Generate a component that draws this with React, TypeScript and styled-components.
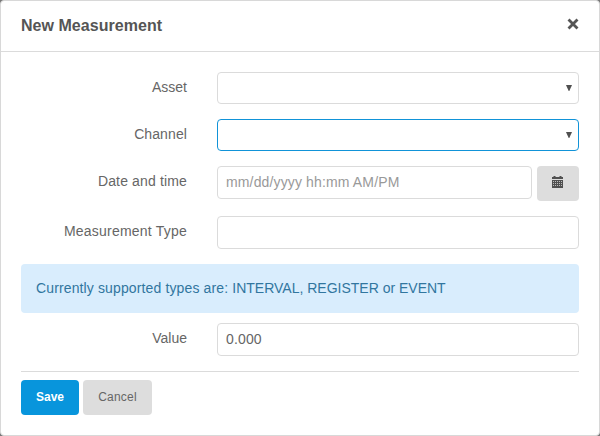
import React from 'react';
import styled, { createGlobalStyle } from 'styled-components';

const GlobalStyle = createGlobalStyle`
  *, *::before, *::after { box-sizing: border-box; }
  body {
    margin: 0;
    background: #777;
    font-family: "Liberation Sans", Arial, sans-serif;
    font-size: 14px;
    color: #666;
  }
  button, input { font-family: inherit; margin: 0; }
`;

const Dialog = styled.section`
  width: 600px;
  height: 436px;
  background: #fff;
  border: 1px solid #d8d8d8;
  border-radius: 4px;
`;

const Header = styled.header`
  display: flex;
  justify-content: space-between;
  height: 51px;
  padding: 0 20px;
  border-bottom: 1px solid #dbdbdb;
`;

const Title = styled.h1`
  margin: 0;
  font-size: 16px;
  line-height: 50px;
  font-weight: bold;
  letter-spacing: 0.04px;
  color: #555;
`;

const CloseButton = styled.button`
  display: flex;
  width: 12px;
  height: 12px;
  margin-top: 17px;
  padding: 0;
  border: 0;
  background: none;
`;

const Form = styled.form`
  padding: 20px 20px 0;
`;

const Row = styled.div`
  display: grid;
  grid-template-columns: 166px 1fr;
  column-gap: 30px;
  align-items: start;
  margin-bottom: 15px;
`;

const Label = styled.label<{ $tracking?: number }>`
  text-align: right;
  line-height: 30px;
  white-space: nowrap;
  letter-spacing: ${(p) => p.$tracking ?? 0}px;
`;

const SelectBox = styled.div<{ $focused?: boolean }>`
  display: flex;
  align-items: center;
  justify-content: flex-end;
  height: 32px;
  padding-right: 6px;
  border: 1px solid ${(p) => (p.$focused ? '#1193d8' : '#dbdbdb')};
  border-radius: 4px;
`;

const TextInput = styled.input`
  display: block;
  width: 100%;
  min-width: 0;
  height: 33px;
  padding: 0 8px 2px;
  border: 1px solid #dbdbdb;
  border-radius: 4px;
  background: #fff;
  color: #666;
  font-size: 14px;
  letter-spacing: 0.14px;
  outline: 0;
  &::placeholder { color: #999; opacity: 1; }
`;

const DateGroup = styled.div`
  display: flex;
  align-items: flex-start;
  gap: 5px;
`;

const CalendarButton = styled.button`
  flex: 0 0 42px;
  display: flex;
  justify-content: center;
  align-items: flex-start;
  height: 35px;
  padding: 10px 0 0;
  border: 0;
  border-radius: 4px;
  background: #ddd;
`;

const Notice = styled.div`
  height: 49px;
  margin-bottom: 10px;
  padding: 0 15px;
  border-radius: 4px;
  background: #d9edfd;
  color: #31769f;
  line-height: 48px;
`;

const NoticeLead = styled.span`
  letter-spacing: 0.13px;
`;

const Footer = styled.footer`
  display: flex;
  gap: 4px;
  padding-top: 8px;
  border-top: 1px solid #dbdbdb;
`;

const ActionButton = styled.button<{ $primary?: boolean }>`
  width: ${(p) => (p.$primary ? 58 : 69)}px;
  height: 35px;
  padding: 0 0 2px;
  border: 0;
  border-radius: 4px;
  background: ${(p) => (p.$primary ? '#0895dc' : '#ddd')};
  color: ${(p) => (p.$primary ? '#fff' : '#666')};
  font-size: 12px;
  font-weight: ${(p) => (p.$primary ? 'bold' : 'normal')};
  letter-spacing: ${(p) => (p.$primary ? 0 : 0.2)}px;
`;

const Arrow = () => (
  <svg width="6" height="6" viewBox="0 0 6 6">
    <path d="M0 0h6L3.3 6h-.6z" fill="#505050" />
  </svg>
);

const CloseIcon = () => (
  <svg width="12" height="12" viewBox="0 0 12 12">
    <path
      d="M2.5 2.4l7 7M9.5 2.4l-7 7"
      stroke="#555"
      strokeWidth="2.8"
      strokeLinecap="square"
    />
  </svg>
);

const CalendarIcon = () => (
  <svg width="12" height="12" viewBox="0 0 12 12">
    <path d="M0 1h1.500V0h2v1h4V0h2v1H11v2H0z" fill="#505050" />
    <path d="M0 4h11v8H0z" fill="#505050" />
    <path
      d="M1 5.500h9M1 7.500h9M1 9.500h9"
      stroke="#bbb"
      strokeWidth="1"
      strokeDasharray="1 1"
    />
  </svg>
);

export default function App() {
  return (
    <>
      <GlobalStyle />
      <Dialog role="dialog" aria-label="New Measurement">
        <Header>
          <Title>New Measurement</Title>
          <CloseButton aria-label="Close"><CloseIcon /></CloseButton>
        </Header>
        <Form>
          <Row>
            <Label>Asset</Label>
            <SelectBox><Arrow /></SelectBox>
          </Row>
          <Row>
            <Label $tracking={0.1}>Channel</Label>
            <SelectBox $focused><Arrow /></SelectBox>
          </Row>
          <Row>
            <Label $tracking={0.15}>Date and time</Label>
            <DateGroup>
              <TextInput placeholder="mm/dd/yyyy hh:mm AM/PM" />
              <CalendarButton type="button" aria-label="Pick a date"><CalendarIcon /></CalendarButton>
            </DateGroup>
          </Row>
          <Row>
            <Label $tracking={0.22}>Measurement Type</Label>
            <TextInput />
          </Row>
          <Notice>
            <NoticeLead>Currently supported types are: </NoticeLead>
            INTERVAL, REGISTER or EVENT
          </Notice>
          <Row>
            <Label>Value</Label>
            <TextInput defaultValue="0.000" />
          </Row>
          <Footer>
            <ActionButton type="button" $primary>Save</ActionButton>
            <ActionButton type="button">Cancel</ActionButton>
          </Footer>
        </Form>
      </Dialog>
    </>
  );
}
